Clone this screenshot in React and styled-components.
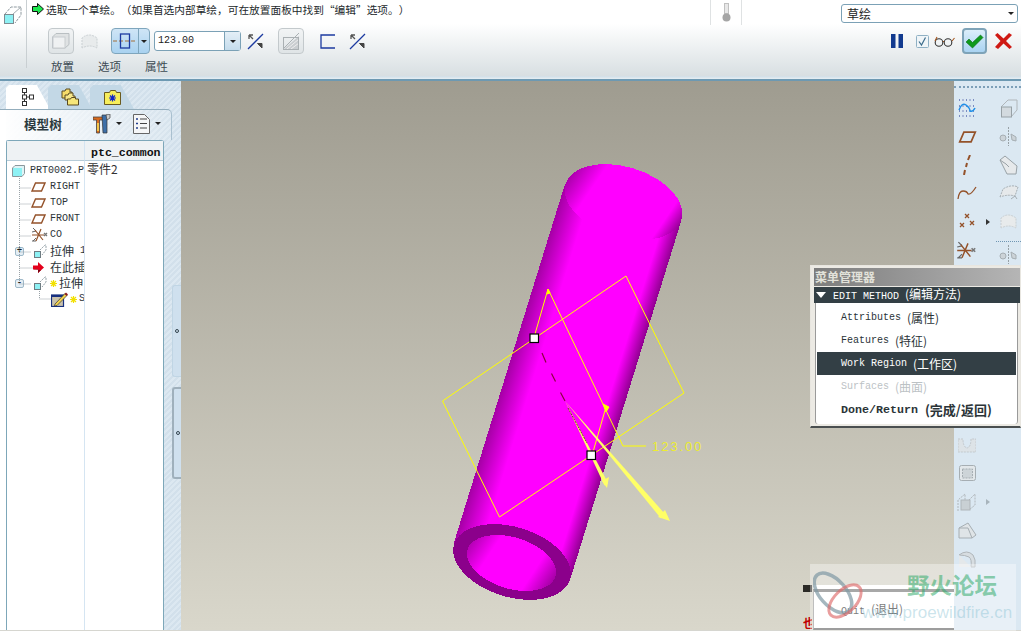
import React from "react";
import styled, { createGlobalStyle } from "styled-components";

const CJK = '"Noto Sans CJK SC", "Liberation Sans", sans-serif';
const MONO = '"Liberation Mono", "Noto Sans CJK SC", monospace';
const HATCH = "repeating-linear-gradient(135deg, #dce8f1 0 2px, #d2e0eb 2px 4px)";

const GlobalStyle = createGlobalStyle`
  html, body { margin: 0; padding: 0; background: #fff; }
  body { font-family: ${CJK}; overflow: hidden; }
`;

const Page = styled.div`
  position: relative;
  width: 1021px;
  height: 631px;
  display: flex;
  flex-direction: column;
  overflow: hidden;
`;

/* ---------- dashboard ---------- */
const Dash = styled.header`
  height: 81px;
  flex: none;
  box-sizing: border-box;
  display: flex;
  background: linear-gradient(#fff 0, #fff 30%, #d8dfe2 96%, #cfdde6 96%, #e6eef3 100%);
  border-bottom: 2px solid #6d99b2;
`;
const DashIconCol = styled.div`
  width: 27px;
  height: 68px;
  flex: none;
  box-sizing: border-box;
  border-right: 1px solid #c9cfd2;
  padding: 5px 0 0 4px;
`;
const DashBody = styled.div`
  flex: 1;
  display: flex;
  flex-direction: column;
`;
const TopRow = styled.div`
  height: 27px;
  display: flex;
  padding-left: 5px;
`;
const Message = styled.div`
  display: flex;
  align-items: center;
  height: 18px;
  gap: 2px;
  font-size: 10.7px;
  text-spacing-trim: space-all;
  color: #23282b;
  white-space: nowrap;
  width: 678px;
`;
const Thermo = styled.div`
  width: 30px;
  height: 25px;
  border-left: 1px solid #dfe2e3;
  border-right: 1px solid #dfe2e3;
  display: flex;
  justify-content: center;
  align-items: center;
`;
const ModeSelect = styled.div`
  margin: 4px 0 0 99px;
  width: 177px;
  height: 19px;
  box-sizing: border-box;
  border: 1px solid #7ba1b6;
  border-radius: 3px;
  background: #fff;
  display: flex;
  align-items: center;
  justify-content: space-between;
  padding: 0 3px 0 5px;
  font-size: 12px;
  color: #222;
`;
const ToolRow = styled.div`
  height: 28px;
  display: flex;
  align-items: center;
`;
const ToolSlot = styled.div`
  flex: none;
  margin-left: ${(p) => p.$gap}px;
  display: flex;
  align-items: center;
  justify-content: center;
`;
const SquareBtn = styled.div`
  width: 26px;
  height: 26px;
  box-sizing: border-box;
  border: 1px solid #c3c9cc;
  border-radius: 4px;
  background: linear-gradient(#f2f4f5, #dfe4e6);
  display: flex;
  align-items: center;
  justify-content: center;
  margin-left: ${(p) => p.$gap}px;
  flex: none;
`;
const SplitBtn = styled.div`
  margin-left: 13px;
  width: 39px;
  height: 26px;
  box-sizing: border-box;
  border: 1px solid #7fa6bd;
  border-radius: 4px;
  background: linear-gradient(#cfe5f6, #a9d2f0);
  display: flex;
  flex: none;
`;
const SplitMain = styled.div`
  width: 26px;
  display: flex;
  align-items: center;
  justify-content: center;
  border-right: 1px solid #7fa6bd;
`;
const SplitArrow = styled.div`
  flex: 1;
  display: flex;
  align-items: center;
  justify-content: center;
`;
const Caret = styled.span`
  display: inline-block;
  width: 0;
  height: 0;
  border-left: ${(p) => p.$size || 3}px solid transparent;
  border-right: ${(p) => p.$size || 3}px solid transparent;
  border-top: ${(p) => p.$size || 3}px solid ${(p) => p.$color || "#222"};
`;
const ValueInput = styled.div`
  margin-left: 4px;
  width: 87px;
  height: 20px;
  box-sizing: border-box;
  border: 1px solid #7ba1b6;
  border-radius: 3px;
  background: #fff;
  display: flex;
  flex: none;
  font: 10px/18px ${MONO};
  color: #222;
`;
const ValueText = styled.div`
  flex: 1;
  padding-left: 3px;
`;
const ValueArrow = styled.div`
  width: 15px;
  border-left: 1px solid #7ba1b6;
  background: linear-gradient(#e4eff7, #c5dcec);
  display: flex;
  align-items: center;
  justify-content: center;
`;
const DoneGroup = styled.div`
  margin-left: auto;
  margin-right: 9px;
  display: flex;
  align-items: center;
`;
const OkBtn = styled.div`
  width: 25px;
  height: 26px;
  box-sizing: border-box;
  margin: 0 8px 0 7px;
  border: 2px solid #7ea3b8;
  border-radius: 4px;
  background: linear-gradient(#dceefa, #a9d3f2);
  display: flex;
  align-items: center;
  justify-content: center;
`;
const TabLabels = styled.div`
  display: flex;
  gap: 24px;
  padding: 3px 0 0 24px;
  font-size: 11.5px;
  line-height: 17px;
  color: #3c4a52;
`;

/* ---------- main area ---------- */
const Main = styled.main`
  flex: 1;
  min-height: 0;
  display: flex;
  border-bottom: 1px solid #d6d6d0;
`;
const LeftPanel = styled.aside`
  width: 181px;
  flex: none;
  display: flex;
  flex-direction: column;
  background: ${HATCH};
`;
const Tabs = styled.div`
  height: 28px;
  flex: none;
  display: flex;
  align-items: flex-end;
  padding-left: 6px;
`;
const Tab = styled.div`
  width: ${(p) => p.$w}px;
  height: 24px;
  margin-right: ${(p) => p.$mr}px;
  display: flex;
  align-items: center;
  justify-content: ${(p) => (p.$active ? "flex-start" : "center")};
  padding-left: ${(p) => (p.$active ? 14 : 0)}px;
  box-sizing: border-box;
  background: ${(p) => (p.$active ? "#fff" : "#c3d8e6")};
  clip-path: polygon(0 100%, 0 3px, 3px 0, 70% 0, 100% 100%);
`;
const PanelRow = styled.div`
  flex: 1;
  min-height: 0;
  display: flex;
`;
const PanelBody = styled.div`
  width: 172px;
  flex: none;
  box-sizing: border-box;
  display: flex;
  flex-direction: column;
  background: linear-gradient(90deg, #fff 0, #fff 6px, transparent 6px);
`;
const PanelHead = styled.div`
  height: 31px;
  flex: none;
  box-sizing: border-box;
  display: flex;
  align-items: center;
  padding: 0 0 3px 24px;
  border-top: 1px solid #93adbc;
  border-right: 1px solid #a9c0cf;
  border-top-right-radius: 5px;
  font-size: 12.6px;
  font-weight: 700;
  color: #2c3a40;
  white-space: nowrap;
  background: linear-gradient(90deg, #fff 0, rgba(255, 255, 255, 0.1) 100%);
`;
const HeadTool = styled.div`
  display: flex;
  align-items: center;
  gap: 5px;
  margin-left: ${(p) => p.$gap}px;
`;
const TreeCard = styled.div`
  position: relative;
  flex: 1;
  min-height: 0;
  width: 158px;
  margin-left: 6px;
  box-sizing: border-box;
  border: 1px solid #7da7b9;
  border-bottom: none;
  border-radius: 3px 3px 0 0;
  background: #fff;
  display: grid;
  grid-template-columns: 77px 1fr;
  grid-template-rows: 20px 1fr;
`;
const ColHead = styled.div`
  background: #eef2f4;
  border-bottom: 1px solid #b5cbd8;
  border-left: ${(p) => (p.$split ? "1px solid #d5e5f2" : "none")};
  font: 700 11.6px/23px ${MONO};
  color: #111;
  padding-left: ${(p) => (p.$split ? 6 : 0)}px;
  white-space: nowrap;
  overflow: hidden;
`;
const NameCol = styled.div`
  padding-top: 2px;
  overflow: hidden;
`;
const ValueCol = styled.div`
  border-left: 1px solid #d5e5f2;
  padding: 0 0 0 2px;
  font-size: 12px;
  line-height: 16px;
  color: #333;
`;
const TreeRow = styled.div`
  height: 16px;
  display: flex;
  align-items: center;
  white-space: nowrap;
  padding-left: ${(p) => p.$indent}px;
  font: 10px/16px ${MONO};
  color: #2c3438;
`;
const RowIcon = styled.span`
  display: inline-flex;
  width: ${(p) => p.$w}px;
  flex: none;
  margin-right: ${(p) => p.$mr ?? 3}px;
`;
const Toggle = styled.span`
  width: 9px;
  height: 9px;
  box-sizing: border-box;
  border: 1px solid #9fb9c9;
  border-radius: 2px;
  background: #e4eef5;
  color: #222;
  flex: none;
  margin-right: 8px;
  font: 700 9px/7px ${MONO};
  text-align: center;
`;
const Han = styled.span`
  font-family: ${CJK};
  font-size: ${(p) => p.$size || 12}px;
`;
const Connectors = styled.svg`
  position: absolute;
  left: 0;
  top: 0;
  pointer-events: none;
`;
const SashRail = styled.div`
  flex: 1;
  padding-top: 176px;
  display: flex;
  flex-direction: column;
  gap: 10px;
`;
const Sash = styled.div`
  height: 92px;
  box-sizing: border-box;
  border: ${(p) => (p.$dark ? "2px solid #9fb0bc" : "1px solid #c0d5e4")};
  border-right: none;
  border-radius: 3px 0 0 3px;
  background: #cfe0ee;
  display: flex;
  align-items: center;
  justify-content: center;
`;
const SashDot = styled.span`
  width: 2px;
  height: 2px;
  border: 1px solid #33444e;
  border-radius: 50%;
`;

const Canvas = styled.section`
  position: relative;
  flex: 1;
  min-width: 0;
  overflow: hidden;
  background: linear-gradient(#9f9c90, #d9d7cb);
`;
const CanvasArt = styled.svg`
  display: block;
`;
const QuitBar = styled.div`
  position: absolute;
  left: 622px;
  top: 504px;
  width: 160px;
  height: 45px;
  display: flex;
  flex-direction: column;
`;
const QuitStrip = styled.div`
  height: 7px;
  margin-left: 10px;
  background: #fff;
  position: relative;
  &::before {
    content: "";
    position: absolute;
    left: -10px;
    top: 0;
    width: 9px;
    height: 7px;
    background: #2b2a26;
  }
`;
const QuitBox = styled.div`
  flex: 1;
  margin-left: 10px;
  box-sizing: border-box;
  background: #fff;
  border-top: 3px solid #777;
  border-bottom: 2px solid #666;
  border-left: 1px solid #999;
  padding-left: 27px;
  font: 10px/33px ${MONO};
  color: #333;
  white-space: nowrap;
`;
const QuitRed = styled.span`
  position: absolute;
  left: 0;
  bottom: 0;
  width: 9px;
  height: 14px;
  overflow: hidden;
  font: 700 12px/14px ${CJK};
  color: #c00000;
`;

const RightBar = styled.aside`
  width: 67px;
  flex: none;
  background: #dbe8f2;
  display: flex;
  flex-direction: column;
`;
const DottedRule = styled.div`
  height: 0;
  margin: 5px 0 6px;
  border-top: 2px dotted #7d9fb8;
`;
const IconGrid = styled.div`
  display: grid;
  grid-template-columns: 26px 16px 25px;
  grid-auto-rows: 28.4px;
  margin-top: ${(p) => p.$top || 0}px;
`;
const IconCell = styled.div`
  position: relative;
  display: flex;
  align-items: ${(p) => (p.$rule ? "flex-end" : "center")};
  justify-content: center;
  overflow: hidden;
  &::before {
    content: ${(p) => (p.$rule ? '""' : "none")};
    position: absolute;
    left: 0;
    right: 0;
    top: 5px;
    border-top: 1px dotted #6f96b3;
  }
`;
const SideArrow = styled.span`
  width: 0;
  height: 0;
  border-top: 3px solid transparent;
  border-bottom: 3px solid transparent;
  border-left: 4px solid ${(p) => p.$color};
`;

/* ---------- menu manager ---------- */
const MenuManager = styled.div`
  position: absolute;
  left: 810px;
  top: 265px;
  width: 211px;
  height: 163px;
  box-sizing: border-box;
  background: #eceae4;
  border: 1px solid #e8e6e0;
  border-bottom: 2px solid #4a4f50;
  padding: 2px 0 0 2px;
  display: flex;
  flex-direction: column;
`;
const MenuTitle = styled.div`
  height: 18px;
  margin: 0 0 1px 1px;
  padding-left: 1px;
  background: linear-gradient(90deg, #7d7d7d, #b5b5b5);
  font: 700 12px/18px ${CJK};
  color: #e2e2da;
`;
const MenuHead = styled.div`
  height: 16px;
  flex: none;
  display: flex;
  align-items: center;
  gap: 7px;
  margin-left: 1px;
  padding-left: 2px;
  background: #333f45;
  color: #fff;
  font: 10px/16px ${MONO};
  white-space: nowrap;
`;
const MenuList = styled.div`
  flex: 1;
  margin: 0 2px 2px 2px;
  padding: 3px 1px 0;
  background: #fff;
  border-left: 1px solid #9a9a9a;
  border-right: 1px solid #9a9a9a;
  border-radius: 0 0 3px 3px;
`;
const MenuItem = styled.div`
  height: 23px;
  box-sizing: border-box;
  padding: 1px 0 0 24px;
  display: flex;
  align-items: center;
  white-space: nowrap;
  font: ${(p) => (p.$bold ? 700 : 400)} ${(p) => (p.$bold ? 11.67 : 10)}px/22px ${MONO};
  color: ${(p) => (p.$disabled ? "#bcc2c5" : p.$active ? "#fff" : "#2b3438")};
  background: ${(p) => (p.$active ? "#333f45" : "transparent")};
`;

/* ---------- forum watermark ---------- */
const Watermark = styled.div`
  position: absolute;
  left: 810px;
  top: 564px;
  width: 206px;
  height: 67px;
  background: rgba(255, 255, 255, 0.36);
  pointer-events: none;
`;
const WatermarkLogo = styled.svg`
  position: absolute;
  left: 3px;
  top: 3px;
`;
const WatermarkTitle = styled.div`
  position: absolute;
  left: 97px;
  top: 5px;
  font: 700 22.5px/30px ${CJK};
  color: rgba(48, 170, 105, 0.55);
  white-space: nowrap;
`;
const WatermarkUrl = styled.div`
  position: absolute;
  left: 52px;
  top: 38px;
  font: 400 17px/22px "Liberation Sans", sans-serif;
  color: rgba(120, 185, 205, 0.38);
  white-space: nowrap;
`;

/* ---------- icons ---------- */
const Svg = ({ w = 16, h = 16, children }) => (
  <svg width={w} height={h} viewBox={`0 0 ${w} ${h}`} fill="none">
    {children}
  </svg>
);

const CubeIcon = () => (
  <Svg w={18} h={18}>
    <path d="M1 8 7 1h10v8l-6 8" stroke="#8f9aa0" strokeDasharray="3 1" />
    <path d="M9 8 17 1" stroke="#a5adb2" />
    <rect x=".5" y="8.500" width="9" height="9" fill="#8ef1f4" stroke="#7e8c92" />
  </Svg>
);
const PartIcon = () => (
  <Svg w={13} h={12}>
    <path d="M3 .5h9.500v8L10 11.500H.5V3z" fill="#dff4f6" stroke="#8b979c" />
    <rect x="1" y="3" width="9" height="8" fill="#8ef1f4" />
  </Svg>
);
const FeatIcon = () => (
  <Svg w={15} h={15}>
    <path d="M8 6 13 1h1v5l-4 5" stroke="#95a2a8" strokeDasharray="2 1" />
    <rect x="2.500" y="7.500" width="6" height="6" fill="#8ef1f4" stroke="#6f7c82" />
  </Svg>
);
const DatumPlane = ({ w = 15, h = 10 }) => (
  <svg width={w} height={h} viewBox="0 0 15 10" fill="none">
    <path d="M1 9 4.500 1H14L10.500 9z" stroke="#94522a" strokeWidth="1.400" />
  </svg>
);
const BigDatumPlane = () => <DatumPlane w={19} h={12} />;
const CsysIcon = ({ size = 1 }) => (
  <svg width={18 * size} height={16 * size} viewBox="0 0 18 16" fill="none">
    <path d="M2 1l3 3M1 5l4-1M1 14h4M5 11l-3 3" stroke="#666" />
    <path d="M1 8h12M10 2 5 14M4 3l8 10" stroke="#94522a" strokeWidth="1.200" />
    <path d="M13 6l3 3M16 6l-3 3" stroke="#777" strokeWidth="1.300" />
  </svg>
);
const BigCsys = () => <CsysIcon size={1.2} />;
const RedArrow = () => (
  <Svg w={11} h={11}>
    <path d="M0 3.500h5V0l6 5.500-6 5.500V7.500H0z" fill="#e3001b" />
    <path d="M0 7.500h5v3.500l3-3z" fill="#7a0010" />
  </Svg>
);
const Star = () => (
  <Svg w={7} h={7}>
    <path d="M3.500 0v7M0 3.500h7M1 1l5 5M6 1 1 6" stroke="#f2e000" strokeWidth="1.200" />
  </Svg>
);
const SketchIcon = () => (
  <Svg w={17} h={15}>
    <rect x=".5" y="3" width="12" height="11.500" fill="#c9c2ac" stroke="#17307f" strokeWidth="1.200" />
    <rect x="1" y="3" width="11" height="2" fill="#17307f" />
    <path d="M4 12 14 1.500l2 2L6 13.500 3.500 14z" fill="#f2d24a" stroke="#333" strokeWidth=".7" />
    <path d="M13.500 2 15 .5l2 2L15.500 4z" fill="#8c1c1c" />
  </Svg>
);
const HierarchyIcon = () => (
  <Svg w={14} h={18}>
    <rect x="2.500" y=".5" width="4" height="4" fill="#fff" stroke="#333" />
    <rect x="2.500" y="7" width="4" height="4" fill="#fff" stroke="#333" />
    <rect x="2.500" y="13.500" width="4" height="4" fill="#fff" stroke="#333" />
    <rect x="9.500" y="7" width="4" height="4" fill="#fff" stroke="#333" />
    <path d="M4.500 4.500V7M4.500 11v2.500M6.500 9h3" stroke="#333" />
  </Svg>
);
const FoldersIcon = () => (
  <Svg w={18} h={18}>
    <path d="M1 3h3l1-2h4v3h2v6H1z" fill="#f6dc6a" stroke="#5a4a20" />
    <path d="M4 7h3l1-2h4v3h2v4H4z" fill="#f8e88a" stroke="#5a4a20" />
    <path d="M6.500 11h3l1-1.500h4v1.500h3v6h-11z" fill="#f6e67a" stroke="#5a4a20" />
  </Svg>
);
const StarFolderIcon = () => (
  <Svg w={17} h={15}>
    <path d="M.5 2.500h5l1-2h5l1 2h4v12H.5z" fill="#f7ee5c" stroke="#6a5a20" />
    <path d="M8.500 4.500v7M5 8h7M6 5.500l5 5M11 5.500l-5 5" stroke="#1326c8" strokeWidth="1.200" />
  </Svg>
);
const ToolsIcon = () => (
  <Svg w={18} h={20}>
    <path d="M0 3h10v3H6.500v13h-3V6H0z" fill="#d96a1d" stroke="#444" strokeWidth=".8" />
    <path d="M9 1h5v18h-4z" fill="#3d6fa8" stroke="#333" strokeWidth=".7" />
    <path d="M13 1l4-1v4l-3 2z" fill="#ccc" stroke="#444" strokeWidth=".7" />
    <rect x="4" y="9" width="2" height="8" fill="#f5c64a" />
  </Svg>
);
const ListIcon = () => (
  <Svg w={17} h={20}>
    <path d="M.5.5h11l5 5v14H.5z" fill="#f5f6f7" stroke="#666" />
    <path d="M3 5h2M3 9.500h2M3 14h2" stroke="#24408f" strokeWidth="1.500" />
    <path d="M7 5h7M7 9.500h7M7 14h7" stroke="#444" />
  </Svg>
);
const GoArrow = () => (
  <Svg w={12} h={12}>
    <path d="M.5 3.500h5V.5L11.500 6l-6 5.500v-3h-5z" fill="#1de84f" stroke="#111" />
  </Svg>
);
const ThermoIcon = () => (
  <Svg w={11} h={20}>
    <rect x="3.500" y=".5" width="4" height="10" fill="#e8e8e8" stroke="#c0c0c0" />
    <circle cx="5.500" cy="14.500" r="4" fill="#a5a5a5" />
  </Svg>
);
const BoxIcon = () => (
  <Svg w={18} h={16}>
    <path d="M4 .5h13v11l-4 3.500H.5V4z" fill="#dfe2e3" stroke="#b9bfc2" />
    <rect x="1" y="4" width="12" height="11" fill="#eff1f2" stroke="#c8cccf" />
  </Svg>
);
const ArchIcon = ({ color = "#c9cfd2" }) => (
  <Svg w={17} h={15}>
    <path d="M1 14V4q7-6 15 0v10q-7-4-15 0z" fill="#e8ebec" stroke={color} strokeDasharray="2 1" />
  </Svg>
);
const ThroughIcon = () => (
  <Svg w={26} h={16}>
    <path d="M1 8h24" stroke="#a4713a" strokeDasharray="4 2" />
    <rect x="8.500" y="1" width="9" height="14" stroke="#1c3aa0" strokeWidth="1.300" />
  </Svg>
);
const FlipIcon = () => (
  <Svg w={17} h={17}>
    <path d="M1 16 16 1" stroke="#1c3aa0" strokeWidth="1.300" />
    <path d="M2 2l4 4M2 2h4M2 2v4" stroke="#555" strokeWidth="1.300" />
    <path d="M15 15l-4-4M15 15v-4.500h-4.500z" fill="#444" stroke="#444" />
  </Svg>
);
const ThickenIcon = () => (
  <Svg w={18} h={18}>
    <path d="M1 17 17 1" stroke="#aab0b3" />
    <path d="M2 17 17 4v13z" fill="#c9cdd0" />
    <path d="M5 17 17 7M9 17l8-6" stroke="#eee" />
    <rect x="1.500" y="5.500" width="15" height="12" stroke="#aab0b3" />
  </Svg>
);
const OpenRect = () => (
  <Svg w={16} h={15}>
    <path d="M15 1H1v13h14" stroke="#1c3aa0" strokeWidth="1.300" />
  </Svg>
);
const PauseIcon = () => (
  <Svg w={12} h={14}>
    <rect width="4.500" height="14" fill="#123a8f" />
    <rect x="7.500" width="4.500" height="14" fill="#123a8f" />
  </Svg>
);
const CheckBox = () => (
  <Svg w={13} h={13}>
    <rect x=".5" y=".5" width="12" height="12" rx="1" fill="#f0f5f8" stroke="#8fb0c4" />
    <path d="M3 6.500 5.500 10 9.500 2.500" stroke="#3c6c8c" strokeWidth="1.200" />
  </Svg>
);
const GlassesIcon = () => (
  <Svg w={21} h={11}>
    <circle cx="5" cy="6.500" r="3.800" stroke="#333" strokeWidth="1.100" />
    <circle cx="14" cy="6.500" r="3.800" stroke="#333" strokeWidth="1.100" />
    <path d="M1 5 3 1M9 5.500h1M18 5l2.500-3" stroke="#a5541c" strokeWidth="1.100" />
  </Svg>
);
const OkCheck = () => (
  <Svg w={19} h={15}>
    <path d="M1 8 4 5l3.500 3.500L15.500 1 18 3.500 7.500 14z" fill="#0f9a1c" stroke="#0a6a12" strokeWidth=".6" />
  </Svg>
);
const CancelX = () => (
  <Svg w={17} h={16}>
    <path d="M0 2 2.500 0 8.500 5.500 14 0l3 2-6 6 6 6-2.500 2L8.500 10.500 3 16l-3-2 5.500-6z" fill="#cf1a14" />
  </Svg>
);
const SplineDots = () => (
  <Svg w={18} h={18}>
    <path d="M1 1h16M1 7h16M1 12h16M1 17h16" stroke="#1b2f8f" strokeDasharray="1 2.500" />
    <path d="M1 11q3-8 7-5t4 6q3 1 5-3" stroke="#1f8fe8" strokeWidth="1.500" />
  </Svg>
);
const SideAxis = () => (
  <Svg w={10} h={20}>
    <path d="M8 0 6 5M5 8 4 12M3 15l-1 5" stroke="#94522a" strokeWidth="2" />
  </Svg>
);
const SideCurve = () => (
  <Svg w={20} h={14}>
    <path d="M1 13q1-8 5-8 4 0 5 3 3 1 8-7" stroke="#94522a" strokeWidth="1.300" />
  </Svg>
);
const SidePoints = () => (
  <Svg w={17} h={17}>
    <path d="M6 1l4 4M10 1 6 5M1 10l4 4M5 10l-4 4M11 8l4 4M15 8l-4 4" stroke="#94522a" strokeWidth="1.300" />
  </Svg>
);
const GhostBox = () => (
  <Svg w={18} h={19}>
    <path d="M1 8 8 1h9v10l-6 7" stroke="#b0b6ba" />
    <rect x="1.500" y="8" width="10" height="10" fill="#d3dadf" stroke="#98a1a6" />
  </Svg>
);
const GhostMirror = () => (
  <Svg w={19} h={19}>
    <path d="M9.500 0v19" stroke="#98a1a6" strokeDasharray="2 1" />
    <circle cx="4" cy="11" r="3" fill="#ccd3d8" stroke="#a6aeb3" />
    <path d="M12 7l5 3v4l-4-1z" fill="#ccd3d8" stroke="#a6aeb3" />
  </Svg>
);
const GhostTrim = () => (
  <Svg w={20} h={20}>
    <path d="M1 5 6 1l12 10-1 8H8z" fill="#e6e9eb" stroke="#98a1a6" />
    <path d="M1 5l6 4 3 3" stroke="#98a1a6" />
  </Svg>
);
const GhostSurface = () => (
  <Svg w={20} h={17}>
    <path d="M1 12 4 4q8-5 15-2l-3 9q-7-2-15 1z" fill="#e6e9eb" stroke="#a6aeb3" strokeDasharray="2 1" />
    <path d="M12 14l4-3 2 3" stroke="#a6aeb3" />
  </Svg>
);
const GhostCut = () => (
  <Svg w={18} h={15}>
    <path d="M0 1h5q0 8 4 9 4-1 4-9h5v13H0z" fill="#dde3e7" stroke="#c3c9cd" strokeDasharray="2 1" />
  </Svg>
);
const GhostShell = () => (
  <Svg w={17} h={17}>
    <rect x=".5" y=".5" width="16" height="15" rx="2" fill="#e2e7ea" stroke="#a6aeb3" />
    <rect x="3.500" y="4" width="10" height="9" fill="#cdd4d8" stroke="#a6aeb3" strokeDasharray="2 1" />
  </Svg>
);
const GhostOffset = () => (
  <Svg w={20} h={20}>
    <path d="M1 19V8L8 2v6M12 8l6-6v11l-6 5" stroke="#b0b6ba" strokeDasharray="2 1" />
    <rect x="4" y="8" width="9" height="10" fill="#c9d0d4" stroke="#b0b6ba" />
  </Svg>
);
const GhostChamfer = () => (
  <Svg w={19} h={18}>
    <path d="M1 6 10 1l8 12-4 3H1z" fill="#dfe4e7" stroke="#a6aeb3" />
    <path d="M1 6h9l4 10" stroke="#a6aeb3" />
  </Svg>
);
const GhostRound = () => (
  <Svg w={19} h={18}>
    <path d="M1 5q8-6 14 0 3 4 2 12h-4q1-8-2-10-4-2-10-2z" fill="#d7dde1" stroke="#b0b6ba" />
    <path d="M1 5v12h12" fill="#e4e8ea" />
  </Svg>
);
const DiamondCaretDown = () => (
  <Svg w={10} h={7}>
    <path d="M0 0h10L5 6z" fill="#fff" />
  </Svg>
);

const CylinderScene = () => (
  <CanvasArt width={773} height={549} viewBox="181 81 773 549">
    <defs>
      <linearGradient id="body" gradientUnits="userSpaceOnUse" x1="454" y1="544" x2="570" y2="580">
        <stop offset="0" stopColor="#a600a6" />
        <stop offset=".22" stopColor="#ff00ff" />
        <stop offset=".86" stopColor="#ff00ff" />
        <stop offset="1" stopColor="#8f008f" />
      </linearGradient>
      <linearGradient id="bore" gradientUnits="userSpaceOnUse" x1="467" y1="550" x2="556" y2="576">
        <stop offset="0" stopColor="#b000b0" />
        <stop offset=".25" stopColor="#ff00ff" />
        <stop offset=".75" stopColor="#ff00ff" />
        <stop offset="1" stopColor="#a000a0" />
      </linearGradient>
    </defs>
    <g shapeRendering="crispEdges">
      <path d="M565 184 L453.500 544 L570 580 L681.500 220 Z" fill="url(#body)" />
      <ellipse cx="623.500" cy="202" rx="60.500" ry="35" transform="rotate(17 623.500 202)" fill="url(#body)" />
      <ellipse cx="512" cy="562" rx="60.500" ry="35" transform="rotate(17 512 562)" fill="#8b008b" />
      <ellipse cx="511.500" cy="563" rx="46" ry="25.700" transform="rotate(17 511.500 563)" fill="url(#bore)" />
    </g>
    <g stroke="#ffff00" fill="none" strokeWidth="1">
      <path d="M442.500 401 626 276 684 393 499.500 517Z" />
      <path d="M535 334 548 289 623 446H646" />
      <path d="M606 407 593 452" />
      <path d="M548 289l-1 5 3-1z" fill="#ffff00" />
      <path d="M603 404l6 3-3 5z" fill="#ffff00" />
    </g>
    <path d="M542 353 546 362.500M551.500 373.500 555.500 381.500M560.500 392.500 565 401" stroke="#8a0040" strokeWidth="1.200" />
    <path d="M565 401 608 483 604.500 485.500Z" fill="#ffff66" />
    <path d="M565 401 665 514 661 518.500Z" fill="#ffff66" />
    <path d="M568 408 587 443" stroke="#6a4a20" strokeWidth="1" strokeDasharray="2 1" />
    <path d="M602 481 609 477 607 488Z" fill="#ffff66" />
    <path d="M658 517 665 510 670 521Z" fill="#ffff66" />
    <rect x="530" y="334" width="8.500" height="8.500" fill="#fff" stroke="#000" strokeWidth="1.200" />
    <rect x="587" y="451" width="8.500" height="8.500" fill="#fff" stroke="#000" strokeWidth="1.200" />
    <text x="652" y="451" fill="#ecec30" fontFamily="Liberation Sans, sans-serif" fontSize="13" letterSpacing="1.900">
      123.00
    </text>
  </CanvasArt>
);

const treeLines =
  "M12.500 35V140M12.500 47H24M12.500 63H24M12.500 79H24M12.500 95H24M12.500 111H24M12.500 127H26M12.500 143H24M32.500 150V158H44";

const sideTop = [
  [SplineDots, GhostBox],
  [BigDatumPlane, GhostMirror],
  [SideAxis, GhostTrim],
  [SideCurve, GhostSurface],
  [SidePoints, ArchIcon],
  [BigCsys, GhostMirror],
];
const sideBottom = [GhostCut, GhostShell, GhostOffset, GhostChamfer, GhostRound];

export default function App() {
  return (
    <Page>
      <GlobalStyle />
      <Dash>
        <DashIconCol>
          <CubeIcon />
        </DashIconCol>
        <DashBody>
          <TopRow>
            <Message>
              <GoArrow />
              <span>选取一个草绘。（如果首选内部草绘，可在放置面板中找到“编辑”选项。）</span>
            </Message>
            <Thermo>
              <ThermoIcon />
            </Thermo>
            <ModeSelect>
              <span>草绘</span>
              <Caret />
            </ModeSelect>
          </TopRow>
          <ToolRow>
            <SquareBtn $gap={21}>
              <BoxIcon />
            </SquareBtn>
            <ToolSlot $gap={7}>
              <ArchIcon />
            </ToolSlot>
            <SplitBtn>
              <SplitMain>
                <ThroughIcon />
              </SplitMain>
              <SplitArrow>
                <Caret />
              </SplitArrow>
            </SplitBtn>
            <ValueInput>
              <ValueText>123.00</ValueText>
              <ValueArrow>
                <Caret />
              </ValueArrow>
            </ValueInput>
            <ToolSlot $gap={6}>
              <FlipIcon />
            </ToolSlot>
            <SquareBtn $gap={14}>
              <ThickenIcon />
            </SquareBtn>
            <ToolSlot $gap={16}>
              <OpenRect />
            </ToolSlot>
            <ToolSlot $gap={13}>
              <FlipIcon />
            </ToolSlot>
            <DoneGroup>
              <PauseIcon />
              <ToolSlot $gap={13}>
                <CheckBox />
              </ToolSlot>
              <ToolSlot $gap={5}>
                <GlassesIcon />
              </ToolSlot>
              <OkBtn>
                <OkCheck />
              </OkBtn>
              <CancelX />
            </DoneGroup>
          </ToolRow>
          <TabLabels>
            <span>放置</span>
            <span>选项</span>
            <span>属性</span>
          </TabLabels>
        </DashBody>
      </Dash>

      <Main>
        <LeftPanel>
          <Tabs>
            <Tab $active $w={44} $mr={-2}>
              <HierarchyIcon />
            </Tab>
            <Tab $w={44} $mr={-2}>
              <FoldersIcon />
            </Tab>
            <Tab $w={44} $mr={0}>
              <StarFolderIcon />
            </Tab>
          </Tabs>
          <PanelRow>
            <PanelBody>
              <PanelHead>
                模型树
                <HeadTool $gap={31}>
                  <ToolsIcon />
                  <Caret $size={3.5} />
                </HeadTool>
                <HeadTool $gap={11}>
                  <ListIcon />
                  <Caret $size={3.5} />
                </HeadTool>
              </PanelHead>
              <TreeCard>
                <ColHead />
                <ColHead $split>ptc_common</ColHead>
                <NameCol>
                  <TreeRow $indent={5}>
                    <RowIcon $w={13} $mr={5}>
                      <PartIcon />
                    </RowIcon>
                    PRT0002.P
                  </TreeRow>
                  <TreeRow $indent={24}>
                    <RowIcon $w={15} $mr={4}>
                      <DatumPlane />
                    </RowIcon>
                    RIGHT
                  </TreeRow>
                  <TreeRow $indent={24}>
                    <RowIcon $w={15} $mr={4}>
                      <DatumPlane />
                    </RowIcon>
                    TOP
                  </TreeRow>
                  <TreeRow $indent={24}>
                    <RowIcon $w={15} $mr={4}>
                      <DatumPlane />
                    </RowIcon>
                    FRONT
                  </TreeRow>
                  <TreeRow $indent={24}>
                    <RowIcon $w={18} $mr={1}>
                      <CsysIcon />
                    </RowIcon>
                    CO
                  </TreeRow>
                  <TreeRow $indent={8}>
                    <Toggle>+</Toggle>
                    <RowIcon $w={15} $mr={3}>
                      <FeatIcon />
                    </RowIcon>
                    <Han>拉伸</Han>&nbsp;1
                  </TreeRow>
                  <TreeRow $indent={26}>
                    <RowIcon $w={11} $mr={6}>
                      <RedArrow />
                    </RowIcon>
                    <Han>在此插入</Han>
                  </TreeRow>
                  <TreeRow $indent={8}>
                    <Toggle>-</Toggle>
                    <RowIcon $w={15} $mr={3}>
                      <FeatIcon />
                    </RowIcon>
                    <RowIcon $w={7} $mr={2}>
                      <Star />
                    </RowIcon>
                    <Han>拉伸</Han>
                  </TreeRow>
                  <TreeRow $indent={44}>
                    <RowIcon $w={17} $mr={2}>
                      <SketchIcon />
                    </RowIcon>
                    <RowIcon $w={7} $mr={2}>
                      <Star />
                    </RowIcon>
                    S
                  </TreeRow>
                </NameCol>
                <ValueCol>零件2</ValueCol>
                <Connectors width="77" height="180" fill="none">
                  <path d={treeLines} stroke="#9aa3a8" strokeDasharray="1 1" />
                </Connectors>
              </TreeCard>
            </PanelBody>
            <SashRail>
              <Sash>
                <SashDot />
              </Sash>
              <Sash $dark>
                <SashDot />
              </Sash>
            </SashRail>
          </PanelRow>
        </LeftPanel>

        <Canvas>
          <CylinderScene />
          <QuitBar>
            <QuitStrip />
            <QuitBox>
              Quit <Han>(退出)</Han>
            </QuitBox>
            <QuitRed>也</QuitRed>
          </QuitBar>
        </Canvas>

        <RightBar>
          <DottedRule />
          <IconGrid>
            {sideTop.map(([Left, Right], i) => (
              <React.Fragment key={i}>
                <IconCell>
                  <Left />
                </IconCell>
                <IconCell>{i === 4 && <SideArrow $color="#333" />}</IconCell>
                <IconCell $rule={i === 5}>
                  <Right />
                </IconCell>
              </React.Fragment>
            ))}
          </IconGrid>
          <IconGrid $top={167}>
            {sideBottom.map((Icon, i) => (
              <React.Fragment key={i}>
                <IconCell>
                  <Icon />
                </IconCell>
                <IconCell>{i === 2 && <SideArrow $color="#a8b4bc" />}</IconCell>
                <IconCell />
              </React.Fragment>
            ))}
          </IconGrid>
        </RightBar>
      </Main>

      <MenuManager>
        <MenuTitle>菜单管理器</MenuTitle>
        <MenuHead>
          <DiamondCaretDown />
          <span>
            EDIT METHOD&nbsp;<Han>(编辑方法)</Han>
          </span>
        </MenuHead>
        <MenuList>
          <MenuItem>
            Attributes&nbsp;<Han>(属性)</Han>
          </MenuItem>
          <MenuItem>
            Features&nbsp;<Han>(特征)</Han>
          </MenuItem>
          <MenuItem $active>
            Work Region&nbsp;<Han>(工作区)</Han>
          </MenuItem>
          <MenuItem $disabled>
            Surfaces&nbsp;<Han>(曲面)</Han>
          </MenuItem>
          <MenuItem $bold>
            Done/Return&nbsp;<Han $size={13}>(完成/返回)</Han>
          </MenuItem>
        </MenuList>
      </MenuManager>

      <Watermark>
        <WatermarkLogo width="60" height="56" viewBox="0 0 60 56" fill="none">
          <ellipse cx="20" cy="26" rx="24" ry="13" transform="rotate(48 20 26)" stroke="#7f98a4" strokeWidth="3.500" opacity=".7" />
          <ellipse cx="32" cy="34" rx="20" ry="11" transform="rotate(-45 32 34)" stroke="#dd6a6a" strokeWidth="3" opacity=".65" />
        </WatermarkLogo>
        <WatermarkTitle>野火论坛</WatermarkTitle>
        <WatermarkUrl>www.proewildfire.cn</WatermarkUrl>
      </Watermark>
    </Page>
  );
}
